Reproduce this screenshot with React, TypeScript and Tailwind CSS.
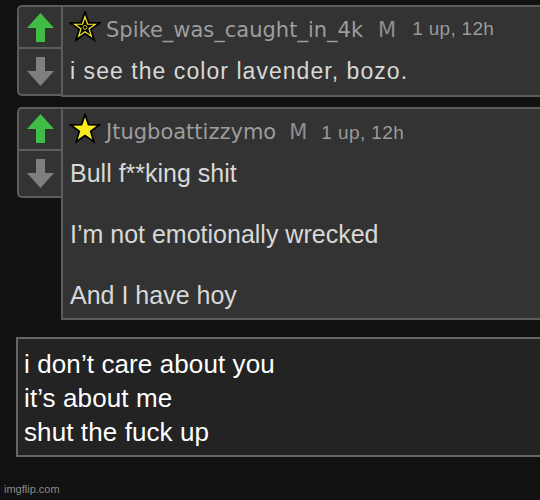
import React from "react";

const UpArrow = () => (
  <svg width="27" height="29" viewBox="0 0 27 29">
    <polygon points="13.5,0 27,15 18,15 18,29 9,29 9,15 0,15" fill="#41bd47" />
  </svg>
);

const DownArrow = () => (
  <svg width="27" height="29" viewBox="0 0 27 29">
    <polygon points="9,0 18,0 18,14 27,14 13.5,29 0,14 9,14" fill="#7f7f7f" />
  </svg>
);

const STAR =
  "15,1.5 18.29,10.97 28.32,11.17 20.33,17.23 23.23,26.83 15,21.1 6.77,26.83 9.67,17.23 1.68,11.17 11.71,10.97";
const INNER =
  "15,5.42 17.37,12.24 24.59,12.4 18.84,16.74 20.92,23.66 15,19.53 9.08,23.66 11.16,16.74 5.41,12.4 12.63,12.24";

const StarOutline = () => (
  <svg width="32" height="32" viewBox="0 0 30 30" className="shrink-0 -ml-px -mt-px">
    <polygon points={STAR} fill="#000" stroke="#000" strokeWidth="2" strokeLinejoin="miter" />
    <polygon points={INNER} fill="none" stroke="#f2e52a" strokeWidth="1.2" strokeLinejoin="miter" />
    <circle cx="15" cy="15.3" r="1.8" fill="none" stroke="#f2e52a" strokeWidth="0.8" />
  </svg>
);

const StarFilled = () => (
  <svg width="32" height="32" viewBox="0 0 30 30" className="shrink-0 -ml-px -mt-px">
    <polygon points={STAR} fill="#f7ec1c" stroke="#000" strokeWidth="1.6" strokeLinejoin="miter" />
  </svg>
);

const VoteColumn = () => (
  <div className="flex flex-col w-[44px] h-[91px] shrink-0 self-start border-2 border-r-0 border-[#5c5c5c] rounded-l-[5px] bg-[#333333]">
    <div className="h-[42px] flex items-center justify-center border-b-2 border-[#5c5c5c]">
      <UpArrow />
    </div>
    <div className="flex-1 flex items-center justify-center">
      <DownArrow />
    </div>
  </div>
);

const SANS = { fontFamily: '"Liberation Sans", Arial, sans-serif' };
const DEJAVU = { fontFamily: '"DejaVu Sans", sans-serif' };

const Comment = ({
  star,
  name,
  lines,
  first,
}: {
  star: React.ReactNode;
  name: string;
  lines: string[];
  first?: boolean;
}) => (
  <div className="flex w-[540px]">
    <VoteColumn />
    <div className="flex-1 border-2 border-[#5c5c5c] bg-[#333333] pl-[7px] pt-[5px] pb-[8px]">
      <div className="flex h-[30px] items-start">
        {star}
        <div className="flex items-baseline mt-[6px] ml-[5px]">
          <span className="text-[21px] leading-[24px] text-[#9d9d9d]" style={DEJAVU}>
            {name}
          </span>
          <span
            className={first ? "ml-[15px] text-[21px] leading-[24px] text-[#8e8e8e]" : "ml-[13px] text-[21px] leading-[24px] text-[#8e8e8e]"}
            style={DEJAVU}
          >
            M
          </span>
          <span
            className={
              first
                ? "relative -top-[2px] ml-[16px] text-[19px] leading-[22px] tracking-[0.3px] text-[#9a9a9a]"
                : "ml-[14px] text-[19px] leading-[22px] tracking-[0.4px] text-[#9a9a9a]"
            }
            style={SANS}
          >
            1 up, 12h
          </span>
        </div>
      </div>
      <div
        className={
          first
            ? "mt-[14px] text-[23px] leading-[30.5px] tracking-[1.05px] text-[#d8d8d8]"
            : "mt-[14px] text-[25px] leading-[30.5px] text-[#d8d8d8]"
        }
        style={SANS}
      >
        {lines.map((l, i) => (
          <div key={i} className="h-[30.5px] whitespace-pre">
            {l}
          </div>
        ))}
      </div>
    </div>
  </div>
);

export default function App() {
  return (
    <div className="relative w-[540px] h-[500px] overflow-hidden bg-[#111111]">
      <div className="flex flex-col pt-[5px] pl-[17px]">
        <Comment first star={<StarOutline />} name="Spike_was_caught_in_4k" lines={["i see the color lavender, bozo."]} />
        <div className="mt-[10px]">
          <Comment
            star={<StarFilled />}
            name="Jtugboattizzymo"
            lines={["Bull f**king shit", "", "I’m not emotionally wrecked", "", "And I have hoy"]}
          />
        </div>
        <div
          className="mt-[17px] -ml-px w-[540px] h-[120px] border-2 border-[#666666] bg-[#232323] pl-[6px] pt-[8px] text-[26px] leading-[34px] tracking-[0.1px] text-white"
          style={SANS}
        >
          <div>i don’t care about you</div>
          <div>it’s about me</div>
          <div>shut the fuck up</div>
        </div>
      </div>
      <div className="absolute left-[4px] top-[483px] text-[11px] leading-[13px] text-[#8a8a8a]" style={SANS}>
        imgflip.com
      </div>
    </div>
  );
}
